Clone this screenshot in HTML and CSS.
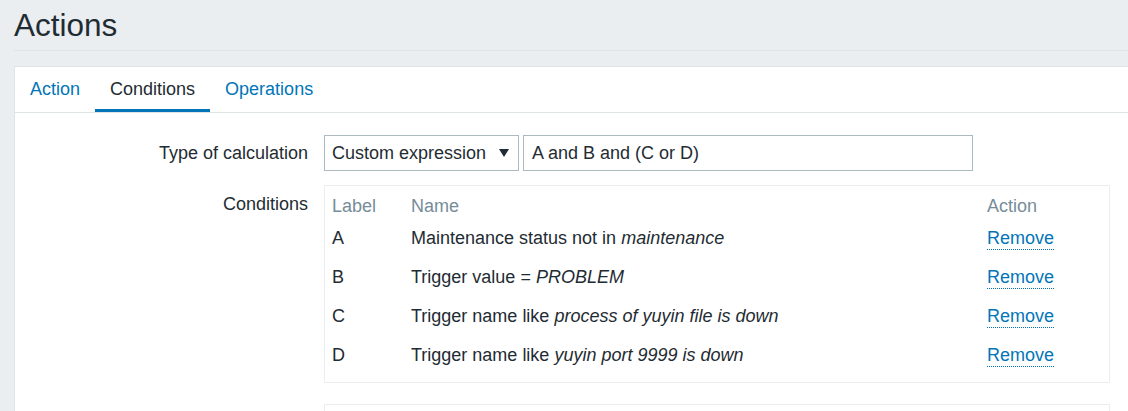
FILE: index.html
```html
<!DOCTYPE html>
<html lang="en">
<head>
<meta charset="utf-8">
<title>Actions</title>
<link rel="stylesheet" href="styles.css">
</head>
<body>
<header class="page-header">
  <h1 class="page-title">Actions</h1>
</header>
<main class="panel">
  <ul class="tabs">
    <li class="tab"><a href="#">Action</a></li>
    <li class="tab tab-active"><a href="#">Conditions</a></li>
    <li class="tab"><a href="#">Operations</a></li>
  </ul>
  <div class="form">
    <div class="form-row">
      <label class="form-label label-calc">Type of calculation</label>
      <div class="form-field calc-field">
        <div class="select">
          <span>Custom expression</span>
          <span class="caret"></span>
        </div>
        <div class="text-input">A and B and (C or D)</div>
      </div>
    </div>
    <div class="form-row row-conditions">
      <label class="form-label label-cond">Conditions</label>
      <div class="cond-box">
        <div class="cond-head">Label</div>
        <div class="cond-head">Name</div>
        <div class="cond-head">Action</div>

        <div class="cond-cell">A</div>
        <div class="cond-cell">Maintenance status not in <em>maintenance</em></div>
        <div class="cond-cell"><a class="link" href="#">Remove</a></div>

        <div class="cond-cell">B</div>
        <div class="cond-cell">Trigger value = <em>PROBLEM</em></div>
        <div class="cond-cell"><a class="link" href="#">Remove</a></div>

        <div class="cond-cell">C</div>
        <div class="cond-cell">Trigger name like <em>process of yuyin file is down</em></div>
        <div class="cond-cell"><a class="link" href="#">Remove</a></div>

        <div class="cond-cell">D</div>
        <div class="cond-cell">Trigger name like <em>yuyin port 9999 is down</em></div>
        <div class="cond-cell"><a class="link" href="#">Remove</a></div>
      </div>
    </div>
    <div class="form-row row-next">
      <div class="form-label"></div>
      <div class="next-box"></div>
    </div>
  </div>
</main>
</body>
</html>
```

FILE: styles.css
```css
html, body {
  margin: 0;
  padding: 0;
  overflow: hidden;
  height: 100%;
}

body {
  background: #ebeef1;
  font-family: "Liberation Sans", Arial, sans-serif;
  font-size: 18px;
  color: #1f2c33;
}

.page-header {
  margin-left: 14px;
  box-sizing: border-box;
  height: 51px;
  border-bottom: 1px solid #dfe4e7;
}

.page-title {
  margin: 0;
  padding-top: 7px;
  font-size: 31.5px;
  line-height: 36px;
  font-weight: normal;
  color: #1f2c33;
}

.panel {
  display: block;
  margin-top: 15px;
  margin-left: 14px;
  background: #ffffff;
  border-top: 1px solid #dfe4e7;
  border-left: 1px solid #dfe4e7;
  height: 600px;
}

.tabs {
  display: flex;
  margin: 0;
  padding: 0;
  list-style: none;
  border-bottom: 1px solid #dfe4e7;
}

.tab {
  padding: 12px 15px 9px;
  line-height: 21px;
  border-bottom: 3px solid transparent;
}

.tab a {
  color: #0275b8;
  text-decoration: none;
}

.tab-active {
  border-bottom-color: #0275b8;
}

.tab-active a {
  color: #1f2c33;
}

.form {
  padding-top: 22px;
}

.form-row {
  display: grid;
  grid-template-columns: 293px 786px;
  column-gap: 16px;
}

.form-label {
  text-align: right;
  line-height: 21px;
}

.label-calc {
  line-height: 36px;
}

.label-cond {
  padding-top: 9px;
}

.calc-field {
  display: flex;
  gap: 4px;
}

.select {
  box-sizing: border-box;
  width: 195px;
  height: 36px;
  border: 1px solid #acbbc2;
  padding: 0 9px 0 7px;
  display: flex;
  align-items: center;
  justify-content: space-between;
  line-height: 21px;
}

.caret {
  width: 0;
  height: 0;
  border-left: 5px solid transparent;
  border-right: 5px solid transparent;
  border-top: 8px solid #1f2c33;
}

.text-input {
  box-sizing: border-box;
  width: 450px;
  height: 36px;
  border: 1px solid #acbbc2;
  padding: 0 8px;
  line-height: 34px;
}

.row-conditions {
  margin-top: 14px;
}

.cond-box {
  box-sizing: border-box;
  width: 786px;
  border: 1px solid #ebeef1;
  padding: 0 1px 7px 7px;
  display: grid;
  grid-template-columns: 79px 576px 1fr;
  line-height: 21px;
}

.cond-head {
  color: #768d99;
  padding: 10px 0 2px;
}

.cond-cell {
  padding: 9px 0;
}

.cond-cell em {
  font-style: italic;
}

.link {
  color: #0275b8;
  text-decoration: none;
  border-bottom: 1px dotted #0275b8;
  padding-bottom: 1px;
}

.row-next {
  margin-top: 21px;
}

.next-box {
  box-sizing: border-box;
  width: 786px;
  height: 200px;
  border: 1px solid #ebeef1;
}
```
